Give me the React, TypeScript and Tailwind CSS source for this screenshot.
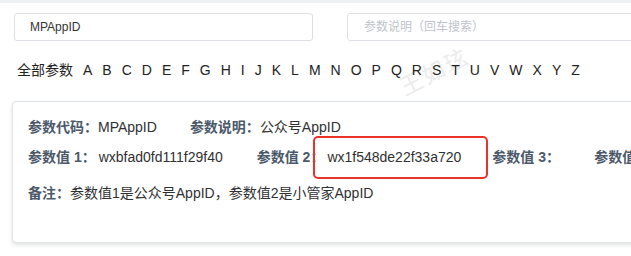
import React from "react";

const letters = "ABCDEFGHIJKLMNOPQRSTUVWXYZ".split("");

function Field({ label, value, offset = "" }: { label: string; value?: string; offset?: string }) {
  return (
    <div className="flex items-center whitespace-nowrap">
      <span className="font-bold text-[#4b596b]">{label}</span>
      {value && <span className={"text-[#303133] " + offset}>{value}</span>}
    </div>
  );
}

export default function App() {
  return (
    <div
      className="relative w-[631px] h-[256px] overflow-hidden bg-white"
      style={{ fontFamily: '"Liberation Sans", "Noto Sans CJK SC", sans-serif' }}
    >
      {/* watermark, sits behind the content */}
      <div className="absolute left-[397px] top-[58px] leading-[28px] -rotate-[27deg] text-[23px] text-[#ececec] tracking-[2px] pointer-events-none select-none">
        王如玹
      </div>

      <div className="relative">
        <div className="h-[3px] bg-[#eef0f3]" />

        <div className="w-[720px] pl-[14px] pt-[10px]">
          {/* search inputs */}
          <div className="flex gap-[34px]">
            <div className="w-[299px] h-[28px] border border-[#dcdfe6] rounded-[3px] bg-white flex items-center pl-[15px] text-[12px] text-[#333]">
              MPAppID
            </div>
            <div className="w-[299px] h-[28px] border border-[#dcdfe6] rounded-[3px] bg-white flex items-center pl-[16px] text-[12px] text-[#c0c4cc]">
              参数说明（回车搜索）
            </div>
          </div>

          {/* letter filter */}
          <div className="flex items-center h-[20px] mt-[19px] pl-[3px] text-[14px] text-[#222] gap-[10px]">
            <span>全部参数</span>
            {letters.map((l) => (
              <span key={l}>{l}</span>
            ))}
          </div>

          {/* param card */}
          <div className="-ml-[2px] mt-[21px] w-[680px] h-[142px] border border-[#dfe4ed] rounded-[4px] bg-white shadow-[0_2px_4px_rgba(0,0,0,0.12)] pl-[15px] pt-[15px] text-[14px] leading-[20px]">
            <div className="flex gap-[33px]">
              <Field label="参数代码：" value="MPAppID" />
              <Field label="参数说明：" value="公众号AppID" />
            </div>
            <div className="flex gap-[34px] mt-[10px]">
              <Field label="参数值 1：" value="wxbfad0fd111f29f40" offset="ml-[3px]" />
              <Field label="参数值 2：" value="wx1f548de22f33a720" offset="ml-[3px]" />
              <div className="w-[68px] -ml-[3px]">
                <Field label="参数值 3：" />
              </div>
              <Field label="参数值 4：" />
            </div>
            <div className="flex mt-[16px] whitespace-nowrap">
              <span className="font-bold text-[#4b596b]">备注：</span>
              <span className="text-[#303133]">参数值1是公众号AppID，参数值2是小管家AppID</span>
            </div>
          </div>
        </div>
      </div>

      {/* annotation box */}
      <div className="absolute left-[313px] top-[136px] w-[175px] h-[43px] border-2 border-[#e8322b] rounded-[5px]" />
    </div>
  );
}
